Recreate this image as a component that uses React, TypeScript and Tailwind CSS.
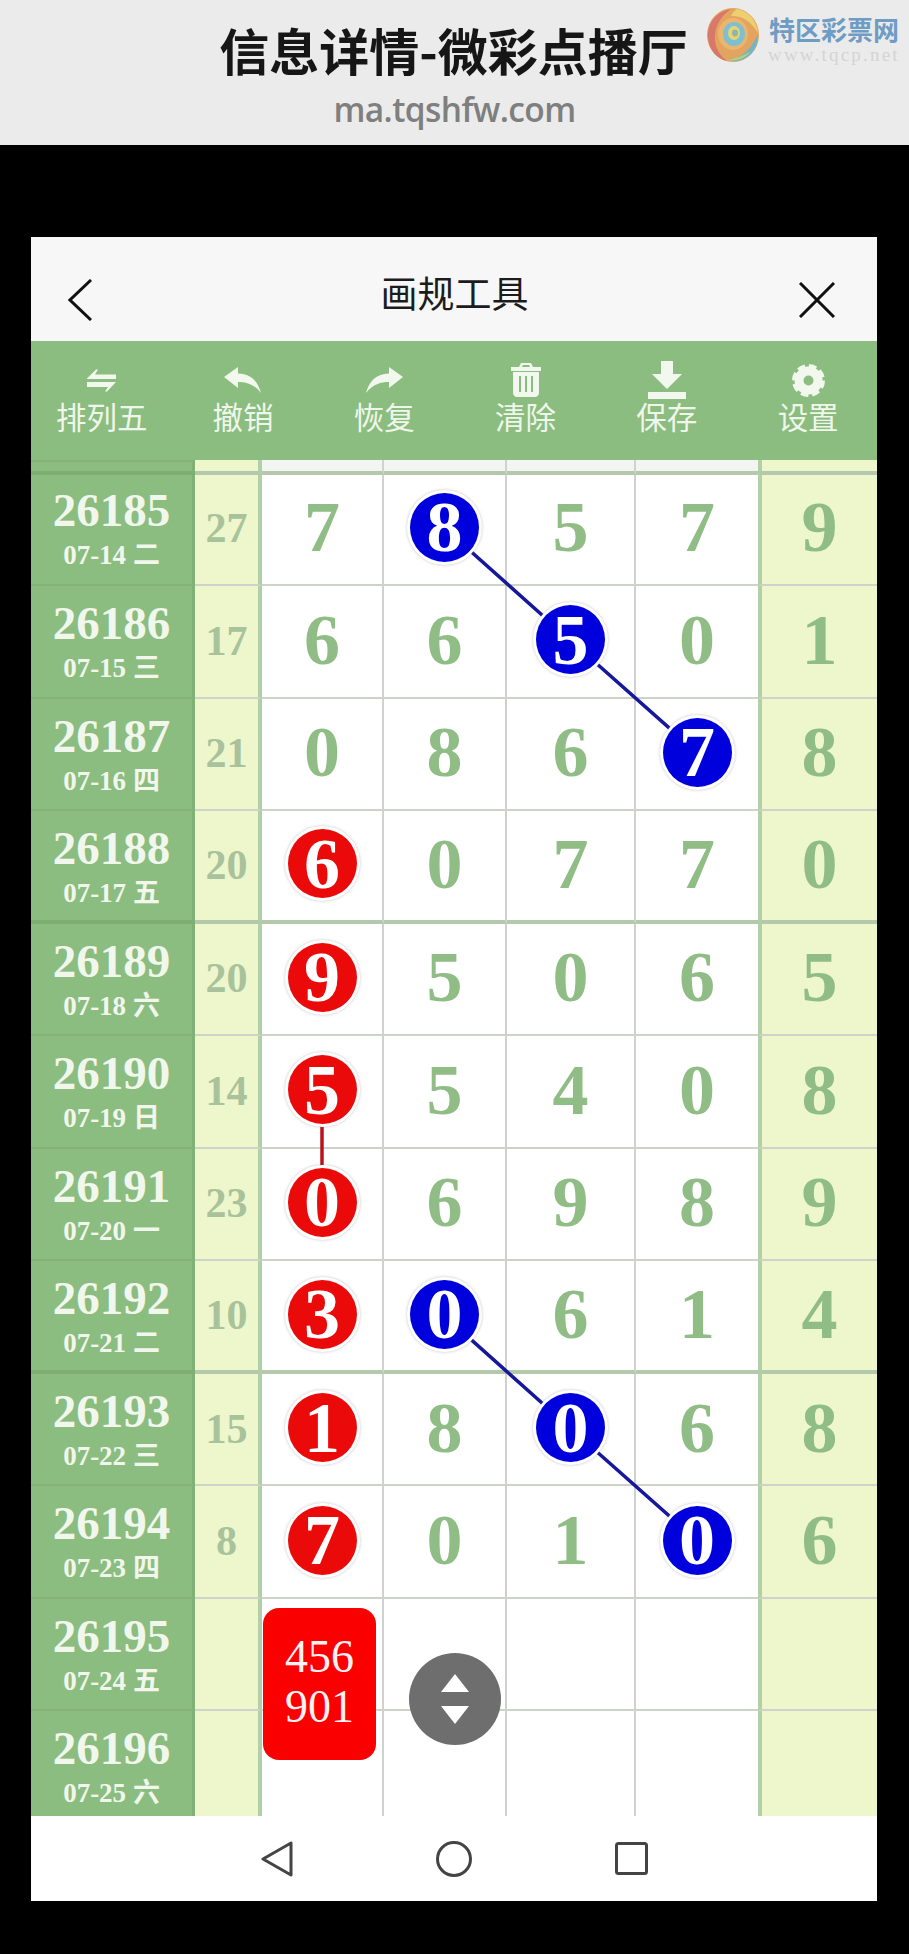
import type { ReactNode } from "react";

type Ball = "r" | "b" | null;
type Row = {
  issue: string;
  date: string;
  day: string;
  sum?: string;
  nums: string[];
  balls: Ball[];
  last?: string;
  thick?: boolean;
};

const rows: Row[] = [
  { issue: "26185", date: "07-14", day: "二", sum: "27", nums: ["7", "8", "5", "7"], balls: [null, "b", null, null], last: "9" },
  { issue: "26186", date: "07-15", day: "三", sum: "17", nums: ["6", "6", "5", "0"], balls: [null, null, "b", null], last: "1" },
  { issue: "26187", date: "07-16", day: "四", sum: "21", nums: ["0", "8", "6", "7"], balls: [null, null, null, "b"], last: "8" },
  { issue: "26188", date: "07-17", day: "五", sum: "20", nums: ["6", "0", "7", "7"], balls: ["r", null, null, null], last: "0", thick: true },
  { issue: "26189", date: "07-18", day: "六", sum: "20", nums: ["9", "5", "0", "6"], balls: ["r", null, null, null], last: "5" },
  { issue: "26190", date: "07-19", day: "日", sum: "14", nums: ["5", "5", "4", "0"], balls: ["r", null, null, null], last: "8" },
  { issue: "26191", date: "07-20", day: "一", sum: "23", nums: ["0", "6", "9", "8"], balls: ["r", null, null, null], last: "9" },
  { issue: "26192", date: "07-21", day: "二", sum: "10", nums: ["3", "0", "6", "1"], balls: ["r", "b", null, null], last: "4", thick: true },
  { issue: "26193", date: "07-22", day: "三", sum: "15", nums: ["1", "8", "0", "6"], balls: ["r", null, "b", null], last: "8" },
  { issue: "26194", date: "07-23", day: "四", sum: "8", nums: ["7", "0", "1", "0"], balls: ["r", null, null, "b"], last: "6" },
  { issue: "26195", date: "07-24", day: "五", nums: ["", "", "", ""], balls: [null, null, null, null] },
  { issue: "26196", date: "07-25", day: "六", nums: ["", "", "", ""], balls: [null, null, null, null] },
];

function Logo() {
  return (
    <svg viewBox="0 0 52 54" className="h-[54px] w-[52px]">
      <ellipse cx="26" cy="27" rx="26" ry="27" fill="#e2a45f" />
      <path d="M24 1C8 4 0 16 1 30c1 12 9 21 19 23-8-6-13-15-12-26C9 16 15 7 24 1z" fill="#d9786a" />
      <path d="M30 1c12 2 20 12 21 24C44 14 37 8 24 8c1-3 3-5 6-7z" fill="#ecd070" />
      <path d="M51 26c1 13-8 26-22 27-3 0-6-1-8-2 14 0 24-11 30-25z" fill="#6fb6c9" />
      <path d="M20 52c10 2 19-2 24-9-7 5-16 7-24 9z" fill="#b6cf79" />
      <ellipse cx="26" cy="26" rx="15" ry="16" fill="#ecb46c" />
      <ellipse cx="27" cy="26" rx="11" ry="12" fill="#7cc0d2" />
      <ellipse cx="27" cy="25" rx="6" ry="7" fill="#e7d374" />
      <ellipse cx="28" cy="25" rx="3" ry="3.5" fill="#8fb7a4" />
    </svg>
  );
}

function ToolItem({ icon, label }: { icon: ReactNode; label: string }) {
  return (
    <div className="flex flex-col items-center">
      <div className="flex h-[40px] items-center justify-center">{icon}</div>
      <span className="-mt-[2px] h-[36px] text-[30.5px] leading-[36px] text-[#eff6ea]">{label}</span>
    </div>
  );
}

function NumberCell({ value, ball, className }: { value: string; ball: Ball; className: string }) {
  return (
    <div className={`flex h-full items-center justify-center bg-white pb-[3px] ${className}`}>
      {ball ? (
        <span className="relative z-10 flex h-[75px] w-[75px] items-center justify-center rounded-full bg-white shadow-[0_0_3px_rgba(120,120,120,0.45)]">
          <span
            className={`flex h-[69px] w-[69px] items-center justify-center rounded-full text-[72px] leading-none font-bold text-white ${
              ball === "r" ? "bg-[#ea0a0a]" : "bg-[#0000dc]"
            }`}
          >
            {value}
          </span>
        </span>
      ) : (
        <span className="text-[72px] leading-none font-bold text-[#90bd86]">{value}</span>
      )}
    </div>
  );
}

function RowView({ row }: { row: Row }) {
  const line = row.thick ? "border-b-[4px] border-b-[#b4c8ab]" : "border-b-2 border-b-[#cdd3c9]";
  return (
    <div className="flex h-[112.55px]">
      <div
        className={`flex h-full w-[164px] flex-col items-center border-r-[3px] border-r-[#80b076] bg-[#8cbd80] pt-[10px] text-[#f1f7ec] ${
          row.thick ? "border-b-[4px] border-b-[#7fae74]" : "border-b-2 border-b-[#83b378]"
        }`}
      >
        <span className="text-[47px] leading-[54px] font-bold">{row.issue}</span>
        <span className="text-[27px] leading-[36px] font-bold">
          {row.date} {row.day}
        </span>
      </div>
      <div className={`flex h-full w-[67px] items-center justify-center border-r-4 border-r-[#b3cfa8] bg-[#eef6cc] text-[42px] font-bold text-[#a8c39b] ${line}`}>
        {row.sum}
      </div>
      <NumberCell value={row.nums[0]} ball={row.balls[0]} className={`w-[122px] border-r-2 border-r-[#cfd2cd] ${line}`} />
      <NumberCell value={row.nums[1]} ball={row.balls[1]} className={`w-[123px] border-r-2 border-r-[#cfd2cd] ${line}`} />
      <NumberCell value={row.nums[2]} ball={row.balls[2]} className={`w-[129px] border-r-2 border-r-[#cfd2cd] ${line}`} />
      <NumberCell value={row.nums[3]} ball={row.balls[3]} className={`w-[122px] ${line}`} />
      <NumberCell value={row.last ?? ""} ball={null} className={`w-[119px] border-l-4 border-l-[#b3cfa8] !bg-[#eef6cc] ${line}`} />
    </div>
  );
}

export default function App() {
  return (
    <div className="relative min-h-[1954px] w-[909px] bg-black font-['Liberation_Serif','Noto_Sans_CJK_SC',serif]">
      <div className="relative flex h-[145px] flex-col items-center bg-[#ebebeb] font-['Noto_Sans_CJK_SC',sans-serif]">
        <div className="mt-[17px] h-[64px] pr-[2px] text-[50px] leading-[64px] font-bold text-[#161616]">信息详情-微彩点播厅</div>
        <div className="mt-[6px] font-['Open_Sans',sans-serif] text-[33.5px] leading-[44px] font-semibold tracking-[-0.6px] text-[#7f7f7f]">ma.tqshfw.com</div>
        <div className="absolute top-[8px] left-[707px] flex items-start gap-[9px]">
          <Logo />
          <div className="flex flex-col items-center">
            <span className="mt-[6px] text-[26px] leading-[30px] font-bold text-[#6f9cc4]">特区彩票网</span>
            <span className="mt-[3px] font-['Liberation_Serif',serif] text-[19px] leading-[16px] tracking-[2.2px] text-[#d4d4d4]">www.tqcp.net</span>
          </div>
        </div>
      </div>

      <div className="ml-[31px] w-[846px] pt-[92px]">
        <div className="flex h-[104px] items-center justify-between bg-[#f7f7f7] pr-[42px] pl-[37px]">
          <svg viewBox="0 0 24 42" className="mt-[21px] h-[42px] w-[24px]" fill="none" stroke="#111" strokeWidth="3">
            <path d="M23 1 2 21l21 20" />
          </svg>
          <span className="mt-[8px] ml-[18px] font-['Noto_Sans_CJK_SC',sans-serif] text-[37px] text-[#1c1c1c]">画规工具</span>
          <svg viewBox="0 0 36 36" className="mt-[21px] h-[36px] w-[36px]" fill="none" stroke="#111" strokeWidth="3">
            <path d="m1 1 34 34M35 1 1 35" />
          </svg>
        </div>

        <div className="grid h-[119px] grid-cols-[repeat(6,141.3px)] bg-[#8cbd80] pt-[19px] font-['Noto_Sans_CJK_SC',sans-serif]">
          <ToolItem
            label="排列五"
            icon={
              <svg viewBox="0 0 29 23" className="h-[23px] w-[29px]" fill="#f3f8ef">
                <path d="M0 9.5 9 .5h2l-3 5h21V10H0zM0 13h29l-9 9.5h-2l3-4.5H0z" />
              </svg>
            }
          />
          <ToolItem
            label="撤销"
            icon={
              <svg viewBox="0 0 37 26" className="h-[26px] w-[37px]" fill="#f3f8ef">
                <path d="M0 10 14 0v6.5C28 7 34 15 37 26 30 17 22 15 14 15v6z" />
              </svg>
            }
          />
          <ToolItem
            label="恢复"
            icon={
              <svg viewBox="0 0 37 26" className="h-[26px] w-[37px]" fill="#f3f8ef">
                <path d="M37 10 23 0v6.5C9 7 3 15 0 26c7-9 15-11 23-11v6z" />
              </svg>
            }
          />
          <ToolItem
            label="清除"
            icon={
              <svg viewBox="0 0 30 34" className="h-[34px] w-[30px]" fill="#f3f8ef">
                <path fillRule="evenodd" d="M10 0h10l2 4h8v4H0V4h8zM12 2l-1 2h8l-1-2zM2 9h26v21c0 2-2 4-4 4H6c-2 0-4-2-4-4zm6 4v16h2V13zm6 0v16h2V13zm6 0v16h2V13z" />
              </svg>
            }
          />
          <ToolItem
            label="保存"
            icon={
              <svg viewBox="0 0 38 38" className="h-[38px] w-[38px]" fill="#f3f8ef">
                <path d="M13 0h12v13h9L19 28 4 13h9zM0 31h38v7H0z" />
              </svg>
            }
          />
          <ToolItem
            label="设置"
            icon={
              <svg viewBox="0 0 33 33" className="h-[33px] w-[33px]">
                <circle cx="16.5" cy="16.5" r="9.5" fill="none" stroke="#f3f8ef" strokeWidth="9" />
                <circle cx="16.5" cy="16.5" r="13.5" fill="none" stroke="#f3f8ef" strokeWidth="6" strokeDasharray="7 3.6" />
              </svg>
            }
          />
        </div>

        <div className="relative h-[1356px] overflow-hidden">
          <div className="relative z-[1] flex h-[15.45px]">
            <div className="w-[164px] border-t-2 border-r-[3px] border-b-[4px] border-t-[#83b378] border-r-[#80b076] border-b-[#7fae74] bg-[#8cbd80]" />
            <div className="w-[67px] border-r-4 border-b-[4px] border-r-[#b3cfa8] border-b-[#b4c8ab] bg-[#eef6cc]" />
            <div className="w-[122px] border-r-2 border-b-[4px] border-r-[#cfd2cd] border-b-[#b4c8ab] bg-[#f2f5f2]" />
            <div className="w-[123px] border-r-2 border-b-[4px] border-r-[#cfd2cd] border-b-[#b4c8ab] bg-[#f2f5f2]" />
            <div className="w-[129px] border-r-2 border-b-[4px] border-r-[#cfd2cd] border-b-[#b4c8ab] bg-[#f2f5f2]" />
            <div className="w-[122px] border-b-[4px] border-b-[#b4c8ab] bg-[#f2f5f2]" />
            <div className="w-[119px] border-b-[4px] border-l-4 border-b-[#b4c8ab] border-l-[#b3cfa8] bg-[#eef6cc]" />
          </div>
          <div className="-mt-[2px]">
            {rows.map((row) => (
              <RowView key={row.issue} row={row} />
            ))}
          </div>

          <svg viewBox="0 0 846 1356" className="pointer-events-none absolute top-0 left-0 z-[5] h-[1356px] w-[846px]" fill="none" strokeWidth="3.5">
            <path d="M413 67.5 539 180 666 292.6" stroke="#17179c" />
            <path d="M291 630V743" stroke="#b8141c" />
            <path d="M413 855.4 539 968 666 1080.5" stroke="#17179c" />
          </svg>

          <div className="absolute top-[1148px] left-[232px] z-20 flex h-[152px] w-[113px] flex-col items-center justify-center rounded-[16px] bg-[#fb0000] pb-[5px] text-[46px] leading-[50px] text-[#fff2f2]">
            <span>456</span>
            <span>901</span>
          </div>
          <div className="absolute top-[1193px] left-[378px] z-20 flex h-[92px] w-[92px] flex-col items-center justify-center gap-[14px] rounded-full bg-[#6e6e6e]">
            <svg viewBox="0 0 28 18" className="h-[18px] w-[28px]" fill="#fff">
              <path d="M14 0 28 18H0z" />
            </svg>
            <svg viewBox="0 0 28 18" className="h-[18px] w-[28px]" fill="#fff">
              <path d="M14 18 28 0H0z" />
            </svg>
          </div>
        </div>

        <div className="flex h-[85px] items-center justify-center gap-[143px] bg-white">
          <svg viewBox="0 0 32 36" className="h-[36px] w-[32px]" fill="none" stroke="#444" strokeWidth="3" strokeLinejoin="round">
            <path d="M30 2v32L2 18z" />
          </svg>
          <svg viewBox="0 0 36 36" className="h-[36px] w-[36px]" fill="none" stroke="#444" strokeWidth="3">
            <circle cx="18" cy="18" r="16.5" />
          </svg>
          <svg viewBox="0 0 33 33" className="h-[33px] w-[33px]" fill="none" stroke="#444" strokeWidth="3">
            <rect x="1.5" y="1.5" width="30" height="30" rx="2" />
          </svg>
        </div>
      </div>
    </div>
  );
}
